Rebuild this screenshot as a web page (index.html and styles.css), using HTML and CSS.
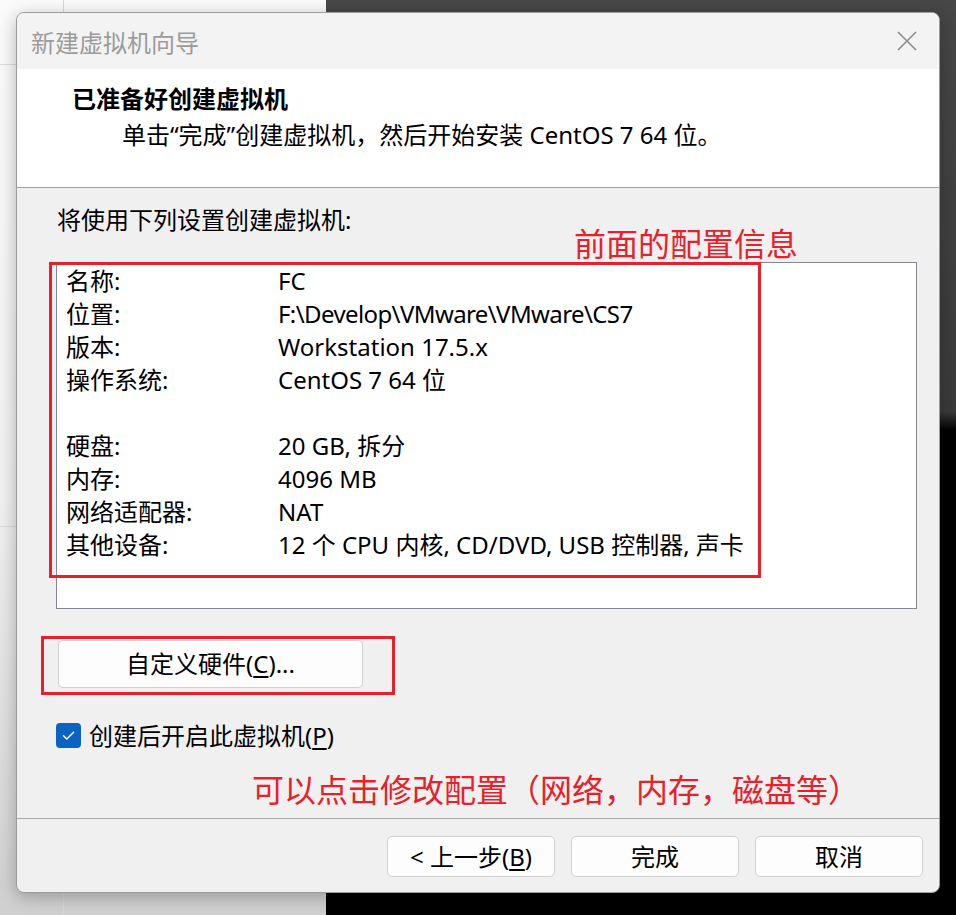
FILE: index.html
```html
<!DOCTYPE html>
<html lang="zh-CN">
<head>
<meta charset="utf-8">
<title>新建虚拟机向导</title>
<link rel="stylesheet" href="styles.css">
</head>
<body>
<div class="desktop">
  <div class="left-pane">
    <div class="side-col">
      <div class="side-cell side-top"></div>
      <div class="side-cell side-mid"></div>
      <div class="side-cell side-bot"></div>
    </div>
    <div class="side-main"></div>
  </div>
  <div class="right-pane"></div>
</div>

<div class="dialog">
  <div class="titlebar">
    <span class="title">新建虚拟机向导</span>
    <svg class="close" width="20" height="20" viewBox="0 0 20 20" aria-hidden="true">
      <path d="M1 1 L19 19 M19 1 L1 19" stroke="#8c8c8c" stroke-width="1.6" fill="none"/>
    </svg>
  </div>

  <div class="header">
    <div class="header-title">已准备好创建虚拟机</div>
    <div class="header-sub">单击“完成”创建虚拟机，然后开始安装 CentOS 7 64 位。</div>
  </div>

  <div class="body">
    <div class="intro">将使用下列设置创建虚拟机:</div>
    <div class="listbox">
      <div class="row"><span class="k">名称:</span><span class="v">FC</span></div>
      <div class="row"><span class="k">位置:</span><span class="v path">F:\Develop\VMware\VMware\CS7</span></div>
      <div class="row"><span class="k">版本:</span><span class="v">Workstation 17.5.x</span></div>
      <div class="row"><span class="k">操作系统:</span><span class="v">CentOS 7 64 位</span></div>
      <div class="row"><span class="k"></span><span class="v"></span></div>
      <div class="row"><span class="k">硬盘:</span><span class="v">20 GB, 拆分</span></div>
      <div class="row"><span class="k">内存:</span><span class="v">4096 MB</span></div>
      <div class="row"><span class="k">网络适配器:</span><span class="v">NAT</span></div>
      <div class="row"><span class="k">其他设备:</span><span class="v">12 个 CPU 内核, CD/DVD, USB 控制器, 声卡</span></div>
    </div>
    <button class="btn btn-custom">自定义硬件(<u>C</u>)...</button>
    <label class="check-row">
      <span class="checkbox">
        <svg width="25" height="25" viewBox="0 0 25 25" aria-hidden="true">
          <path d="M7.5 12.8 L10.8 16 L17.6 9.2" stroke="#fff" stroke-width="1.5" fill="none" stroke-linecap="round" stroke-linejoin="round"/>
        </svg>
      </span>
      <span class="check-label">创建后开启此虚拟机(<u>P</u>)</span>
    </label>
  </div>

  <div class="footer">
    <button class="btn btn-foot">&lt; 上一步(<u>B</u>)</button>
    <button class="btn btn-foot">完成</button>
    <button class="btn btn-foot">取消</button>
  </div>

  <div class="mark mark-list"></div>
  <div class="note note-list">前面的配置信息</div>
  <div class="mark mark-btn"></div>
  <div class="note note-btn">可以点击修改配置（网络，内存，磁盘等）</div>
</div>
</body>
</html>
```

FILE: styles.css
```css
* { box-sizing: border-box; }

html, body {
  margin: 0;
  padding: 0;
}

body {
  width: 956px;
  height: 915px;
  overflow: hidden;
  position: relative;
  font-family: "Noto Sans", "Noto Sans CJK SC", sans-serif;
  color: #000;
}

/* desktop background */
.desktop {
  display: grid;
  grid-template-columns: 326px 1fr;
  height: 915px;
}

.left-pane {
  display: grid;
  grid-template-columns: 64px 1fr;
  background: linear-gradient(180deg, #fbfbfb 0%, #f0f0f0 55%, #d0d0d0 100%);
}

.side-col {
  display: flex;
  flex-direction: column;
  border-right: 1px solid #d9d9d9;
}

.side-top { height: 65px; border-bottom: 1px solid #dcdcdc; }
.side-mid { height: 462px; border-bottom: 1px solid #dcdcdc; }
.side-bot { flex: 1; }

.right-pane {
  background: linear-gradient(180deg, #474747 0%, #3a3a3a 45%, #000 47%, #000 100%);
}

/* dialog window */
.dialog {
  position: absolute;
  left: 16px;
  top: 12px;
  width: 924px;
  height: 881px;
  border: 1px solid #9c9c9c;
  border-radius: 8px;
  overflow: hidden;
  background: #f0f0f0;
  box-shadow: 0 4px 18px rgba(0, 0, 0, 0.28);
  display: flex;
  flex-direction: column;
}

.titlebar {
  height: 56px;
  flex: none;
  background: #f3f3f3;
  display: flex;
  align-items: center;
  justify-content: space-between;
  padding: 0 22px 0 14px;
}

.title {
  font-family: "Noto Sans CJK SC", sans-serif;
  font-size: 24px;
  color: #9b9b9b;
  line-height: 30px;
  padding-top: 1px;
}

.close { display: block; }

.header {
  height: 119px;
  flex: none;
  background: #fff;
  border-bottom: 1px solid #a0a0a0;
  padding: 12px 0 0 55px;
  font-size: 24px;
}

.header-title {
  font-weight: bold;
  line-height: 36px;
}

.header-sub {
  line-height: 36px;
  padding-left: 50px;
}

.body {
  flex: 1;
  padding: 14px 22px 0 39px;
  font-size: 24px;
}

.intro {
  line-height: 36px;
  padding-left: 1px;
}

.listbox {
  margin-top: 24px;
  height: 347px;
  background: #fff;
  border: 1px solid #828790;
  padding: 1px 0 0 9px;
}

.row {
  display: flex;
  height: 33px;
  line-height: 33px;
  white-space: nowrap;
}

.row .k { width: 212px; flex: none; }

.row .path { letter-spacing: -0.6px; }

.btn {
  font-family: "Noto Sans", "Noto Sans CJK SC", sans-serif;
  font-size: 24px;
  color: #000;
  background: #fdfdfd;
  border: 1px solid #d0d0d0;
  border-radius: 5px;
  padding: 0;
  line-height: 1;
}

.btn u { text-underline-offset: 3px; }

.btn-custom {
  display: block;
  margin: 31px 0 0 2px;
  width: 305px;
  height: 48px;
}

.check-row {
  display: flex;
  align-items: center;
  gap: 8px;
  margin-top: 35px;
  height: 25px;
}

.checkbox {
  width: 25px;
  height: 25px;
  border-radius: 4px;
  background: #0a63c0;
  display: block;
}

.checkbox svg { display: block; }

.check-label {
  line-height: 30px;
}

.check-label u { text-underline-offset: 3px; }

.footer {
  height: 74px;
  flex: none;
  border-top: 1px solid #a8a8a8;
  display: flex;
  justify-content: flex-end;
  gap: 16px;
  padding: 17px 16px 0 0;
}

.btn-foot {
  width: 168px;
  height: 41px;
}

/* red annotations over the dialog */
.mark {
  position: absolute;
  border: 3px solid #e8202b;
}

.mark-list {
  left: 32px;
  top: 249px;
  width: 712px;
  height: 316px;
}

.mark-btn {
  left: 24px;
  top: 623px;
  width: 354px;
  height: 59px;
}

.note {
  position: absolute;
  font-family: "Noto Sans CJK SC", sans-serif;
  font-size: 32px;
  line-height: 32px;
  color: #e8202b;
  white-space: nowrap;
}

.note-list {
  left: 557px;
  top: 213px;
}

.note-btn {
  left: 235px;
  top: 759px;
}
```
